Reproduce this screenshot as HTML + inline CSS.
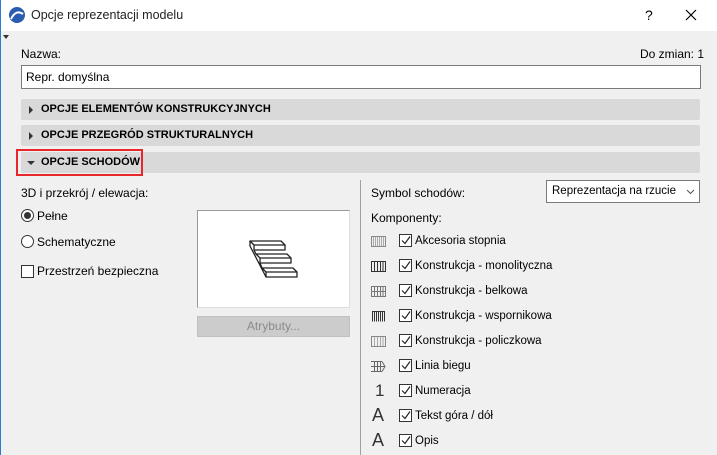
<!DOCTYPE html>
<html><head><meta charset="utf-8"><style>
*{margin:0;padding:0;box-sizing:border-box}
body{width:717px;height:455px;overflow:hidden;background:#f0f0f0;font-family:"Liberation Sans",sans-serif;font-size:12px;color:#000;position:relative}
.a{position:absolute;white-space:nowrap}
.bar{position:absolute;left:21px;width:679px;height:21px;background:#d9d9d9;border-radius:2px;font-weight:bold;font-size:11px;line-height:21px;padding-left:20px}
.bar i{position:absolute;left:8px;top:7px;width:0;height:0;border-top:4px solid transparent;border-bottom:4px solid transparent;border-left:4px solid #333}
.cb{position:absolute;width:13px;height:13px;border:1px solid #333;background:#fff}
.ico{position:absolute;left:371px;width:15px;height:11px;overflow:visible}
.row{position:absolute;left:396px;font-size:11.5px}.row .cb{position:relative;display:inline-block;vertical-align:middle}.row span{margin-left:3px;vertical-align:middle}
</style></head><body>
<div class="a" style="left:0;top:0;width:717px;height:31px;background:#fff"></div>
<div class="a" style="left:0;top:0;width:1px;height:455px;background:#2b7bd3"></div>
<svg class="a" style="left:8px;top:6px" width="18" height="18" viewBox="0 0 18 18"><circle cx="9" cy="9" r="8" fill="#2a5db0"/><path d="M3 13 Q8 3 15 8" stroke="#fff" stroke-width="2" fill="none"/></svg>
<div class="a" style="left:31px;top:8px;font-size:12.5px;color:#222">Opcje reprezentacji modelu</div>
<div class="a" style="left:645px;top:7px;font-size:14px">?</div>
<svg class="a" style="left:685px;top:9px" width="12" height="12"><path d="M1 1L11 11M11 1L1 11" stroke="#000" stroke-width="1.2"/></svg>
<div class="a" style="left:3px;top:35px;border-left:3px solid transparent;border-right:3px solid transparent;border-top:4px solid #333"></div>
<div class="a" style="left:21px;top:47px">Nazwa:</div>
<div class="a" style="left:640px;top:47px">Do zmian: 1</div>
<div class="a" style="left:21px;top:65px;width:680px;height:24px;background:#fff;border:1px solid #7a7a7a;padding:4px 4px;line-height:14px">Repr. domyślna</div>
<div class="bar" style="top:99px"><i></i>OPCJE ELEMENTÓW KONSTRUKCYJNYCH</div>
<div class="bar" style="top:125px"><i></i>OPCJE PRZEGRÓD STRUKTURALNYCH</div>
<div class="bar" style="top:152px"><i style="left:6px;top:9px;border-left:4px solid transparent;border-right:4px solid transparent;border-top:4px solid #333;border-bottom:0"></i>OPCJE SCHODÓW</div>
<div class="a" style="left:16px;top:149px;width:127px;height:27px;border:2px solid #e8272a"></div>
<div class="a" style="left:21px;top:186px">3D i przekrój / elewacja:</div>
<div class="a" style="left:21px;top:209px;width:13px;height:13px;border:1px solid #333;border-radius:50%;background:#fff"><div style="position:absolute;left:2px;top:2px;width:7px;height:7px;border-radius:50%;background:#333"></div></div>
<div class="a" style="left:37px;top:209px">Pełne</div>
<div class="a" style="left:21px;top:235px;width:13px;height:13px;border:1px solid #333;border-radius:50%;background:#fff"></div>
<div class="a" style="left:37px;top:235px">Schematyczne</div>
<div class="cb" style="left:21px;top:265px"></div>
<div class="a" style="left:37px;top:264px">Przestrzeń bezpieczna</div>
<div class="a" style="left:197px;top:210px;width:153px;height:98px;background:#fff;border:1px solid #999;border-right-color:#ddd;border-bottom-color:#ddd"></div>
<svg class="a" style="left:249px;top:240px" width="52" height="44" viewBox="0 0 52 44" fill="none" stroke="#222" stroke-width="1.3" stroke-linejoin="round">
<path d="M1 1h31l4 4H5zM5 5v5h31V5"/>
<path d="M7 14h31l4 4H11zM11 18v5h31v-5"/>
<path d="M13 28h31l4 4H17zM17 32v5h31v-5"/>
<path d="M1 1v5l16 31M5 10l2 4M11 23l2 5"/>
</svg>
<div class="a" style="left:197px;top:316px;width:153px;height:21px;background:#cccccc;border:1px solid #c0c0c0;color:#8a8a8a;text-align:center;line-height:19px">Atrybuty...</div>
<div class="a" style="left:360px;top:180px;width:1px;height:275px;background:#a0a0a0"></div>
<div class="a" style="left:371px;top:186px">Symbol schodów:</div>
<div class="a" style="left:546px;top:180px;width:154px;height:23px;background:#fff;border:1px solid #7a7a7a;padding:3px 5px;line-height:15px;font-size:11.5px">Reprezentacja na rzucie</div>
<svg class="a" style="left:686px;top:189px" width="9" height="6"><path d="M1 1l3.5 3.5L8 1" stroke="#555" fill="none"/></svg>
<div class="a" style="left:371px;top:211px">Komponenty:</div>
<svg class="ico" style="top:236px" viewBox="0 0 15 11"><path d="M.5 .5h14v10H.5z" fill="none" stroke="#888"/><path d="M2.5 1v9M4.5 1v9M6.5 1v9M8.5 1v9M10.5 1v9M12.5 1v9" stroke="#aaa"/></svg>
<svg class="ico" style="top:261px" viewBox="0 0 15 11"><path d="M.5 .5h14v10H.5z" fill="none" stroke="#333"/><path d="M3.5 1v9M6.5 1v9M9.5 1v9M12 1v9" stroke="#333"/></svg>
<svg class="ico" style="top:286px" viewBox="0 0 15 11"><path d="M.5 .5h14v10H.5z" fill="none" stroke="#777"/><path d="M0 5.5h15M3.5 1v9M6.5 1v9M9.5 1v9M12 1v9" stroke="#777"/></svg>
<svg class="ico" style="top:311px" viewBox="0 0 15 11"><path d="M1.5 .5v10M3.5 .5v10M5.5 .5v10M7.5 .5v10M9.5 .5v10M11.5 .5v10M13.5 .5v10M1 .5h13" stroke="#333" fill="none"/></svg>
<svg class="ico" style="top:336px" viewBox="0 0 15 11"><path d="M.5 .5h14v10H.5z" fill="none" stroke="#888"/><path d="M3.5 1v9M6.5 1v9M9.5 1v9M12 1v9" stroke="#aaa"/></svg>
<svg class="ico" style="top:361px" viewBox="0 0 15 11"><path d="M0 .5h11M0 10.5h11M0 5.5h14M3.5 1v9M6.5 1v9M9.5 1v9M11 .5l3 5-3 5" stroke="#666" fill="none"/></svg>
<div class="a" style="left:375px;top:381px;font-size:17px;color:#333">1</div>
<div class="a" style="left:372px;top:405px;font-size:18px;color:#333">A</div>
<div class="a" style="left:372px;top:430px;font-size:18px;color:#333">A</div>
<div class="row" style="top:234px"><span class="cb"><svg width="11" height="11" style="position:absolute;left:0;top:0"><path d="M2 5.5l3 3 5-7" stroke="#222" fill="none" stroke-width="1.2"/></svg></span><span>Akcesoria stopnia</span></div>
<div class="row" style="top:259px"><span class="cb"><svg width="11" height="11" style="position:absolute;left:0;top:0"><path d="M2 5.5l3 3 5-7" stroke="#222" fill="none" stroke-width="1.2"/></svg></span><span>Konstrukcja - monolityczna</span></div>
<div class="row" style="top:284px"><span class="cb"><svg width="11" height="11" style="position:absolute;left:0;top:0"><path d="M2 5.5l3 3 5-7" stroke="#222" fill="none" stroke-width="1.2"/></svg></span><span>Konstrukcja - belkowa</span></div>
<div class="row" style="top:309px"><span class="cb"><svg width="11" height="11" style="position:absolute;left:0;top:0"><path d="M2 5.5l3 3 5-7" stroke="#222" fill="none" stroke-width="1.2"/></svg></span><span>Konstrukcja - wspornikowa</span></div>
<div class="row" style="top:334px"><span class="cb"><svg width="11" height="11" style="position:absolute;left:0;top:0"><path d="M2 5.5l3 3 5-7" stroke="#222" fill="none" stroke-width="1.2"/></svg></span><span>Konstrukcja - policzkowa</span></div>
<div class="row" style="top:359px"><span class="cb"><svg width="11" height="11" style="position:absolute;left:0;top:0"><path d="M2 5.5l3 3 5-7" stroke="#222" fill="none" stroke-width="1.2"/></svg></span><span>Linia biegu</span></div>
<div class="row" style="top:384px"><span class="cb"><svg width="11" height="11" style="position:absolute;left:0;top:0"><path d="M2 5.5l3 3 5-7" stroke="#222" fill="none" stroke-width="1.2"/></svg></span><span>Numeracja</span></div>
<div class="row" style="top:409px"><span class="cb"><svg width="11" height="11" style="position:absolute;left:0;top:0"><path d="M2 5.5l3 3 5-7" stroke="#222" fill="none" stroke-width="1.2"/></svg></span><span>Tekst góra / dół</span></div>
<div class="row" style="top:434px"><span class="cb"><svg width="11" height="11" style="position:absolute;left:0;top:0"><path d="M2 5.5l3 3 5-7" stroke="#222" fill="none" stroke-width="1.2"/></svg></span><span>Opis</span></div>
</body></html>
